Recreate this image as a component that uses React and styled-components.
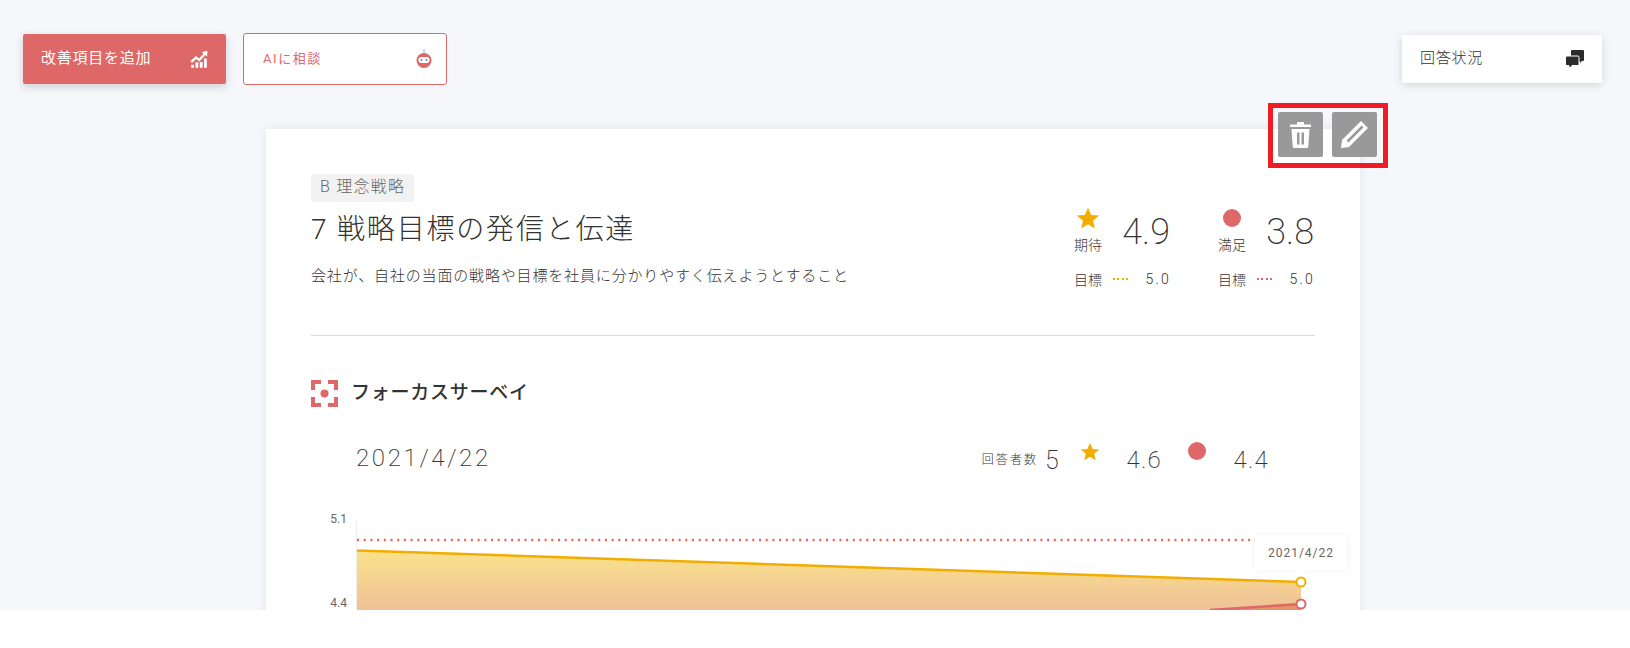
import styled, { createGlobalStyle } from 'styled-components';

const colors = {
  page: '#f6f7fb',
  coral: '#de6868',
  amber: '#f2ad00',
  ink: '#333333',
  grey: '#999999',
};

const GlobalStyle = createGlobalStyle`
  html, body {
    margin: 0;
    background: #fff;
  }
  * {
    box-sizing: border-box;
  }
  body {
    font-family: 'Roboto', 'Noto Sans CJK JP', sans-serif;
    color: ${colors.ink};
  }
`;

const Page = styled.div`
  position: relative;
  height: 610px;
  padding-top: 33px;
  overflow: hidden;
  background: ${colors.page};
`;

const Toolbar = styled.div`
  display: flex;
  align-items: center;
  height: 52px;
  padding: 0 28px 0 23px;
`;

const ButtonText = styled.span`
  margin-bottom: ${(p) => p.$lift}px;
`;

const AddButton = styled.div`
  display: flex;
  align-items: center;
  justify-content: space-between;
  width: 203px;
  height: 50px;
  padding: 0 18px;
  background: ${colors.coral};
  border-radius: 2px;
  box-shadow: 0 3px 8px rgba(0, 0, 0, 0.16);
  color: #fff;
  font-size: 15px;
  letter-spacing: 0.05em;
`;

const AiButton = styled.div`
  display: flex;
  align-items: center;
  justify-content: space-between;
  width: 204px;
  height: 52px;
  margin-left: 17px;
  padding: 0 14px 0 19px;
  background: #fff;
  border: 1px solid ${colors.coral};
  border-radius: 3px;
  color: ${colors.coral};
  font-size: 13px;
  letter-spacing: 0.12em;
`;

const StatusButton = styled.div`
  display: flex;
  align-items: center;
  justify-content: space-between;
  width: 200px;
  height: 48px;
  margin-left: auto;
  padding: 0 18px;
  background: #fff;
  border-radius: 2px;
  box-shadow: 0 2px 8px rgba(0, 0, 0, 0.14);
  font-size: 15px;
  font-weight: 300;
  letter-spacing: 0.05em;
`;

const Card = styled.main`
  width: 1094px;
  min-height: 700px;
  margin: 44px 0 0 266px;
  padding: 45px;
  background: #fff;
  box-shadow: 0 0 10px rgba(0, 0, 0, 0.08);
`;

const CardActions = styled.div`
  position: absolute;
  left: 1268px;
  top: 103px;
  display: flex;
  gap: 9px;
  width: 120px;
  height: 65px;
  padding: 4px 5px;
  border: 5px solid #ee1c25;
`;

const ActionButton = styled.div`
  display: flex;
  align-items: center;
  justify-content: center;
  width: 45px;
  height: 45px;
  background: ${colors.grey};
  border-radius: 2px;
`;

const Header = styled.header`
  display: flex;
  justify-content: space-between;
  padding-bottom: 46px;
  border-bottom: 1px solid #dcdcdc;
`;

const Tag = styled.span`
  display: inline-flex;
  align-items: center;
  height: 28px;
  padding: 0 9px 6px;
  background: #f2f2f2;
  border-radius: 2px;
  color: #666;
  font-size: 16px;
  font-weight: 300;
  letter-spacing: 0.08em;
`;

const Title = styled.h1`
  margin: 8px 0 0;
  font-size: 28px;
  font-weight: 300;
  line-height: 40px;
  letter-spacing: 0.065em;
`;

const Description = styled.p`
  margin: 14px 0 0;
  font-size: 15px;
  font-weight: 300;
  line-height: 24px;
  letter-spacing: 0.056em;
`;

const Metrics = styled.div`
  display: flex;
  gap: 49px;
  margin: 31px 2px 0 0;
`;

const Metric = styled.div`
  width: 95px;
`;

const MetricTop = styled.div`
  display: flex;
  align-items: center;
  justify-content: space-between;
  height: 50px;
`;

const MetricLabel = styled.div`
  display: flex;
  flex-direction: column;
  align-items: center;
  width: 28px;
  font-size: 14px;
  font-weight: 300;
  line-height: 18px;
  white-space: nowrap;
`;

const IconSlot = styled.div`
  display: flex;
  align-items: center;
  justify-content: center;
  height: 24px;
  margin-bottom: 6px;
`;

const Dot = styled.span`
  display: block;
  width: ${(p) => p.$size}px;
  height: ${(p) => p.$size}px;
  border-radius: 50%;
  background: ${colors.coral};
`;

const MetricValue = styled.span`
  position: relative;
  top: 2px;
  margin-right: -1px;
  font-size: 36px;
  font-weight: 200;
  line-height: 1;
`;

const TargetRow = styled.div`
  display: flex;
  align-items: center;
  height: 20px;
  margin-top: 14px;
  font-size: 14px;
  font-weight: 300;
`;

const TargetDots = styled.span`
  width: 16px;
  height: 2px;
  margin-left: 11px;
  background: repeating-linear-gradient(90deg, ${(p) => p.$color} 0 2px, transparent 2px 4.4px);
`;

const TargetValue = styled.span`
  margin: 0 -2px 0 auto;
  letter-spacing: 0.16em;
`;

const SectionTitle = styled.div`
  display: flex;
  align-items: center;
  gap: 13px;
  height: 27px;
  margin-top: 44px;
  font-size: 19px;
  font-weight: 500;
  letter-spacing: 0.04em;
`;

const SectionLabel = styled.span`
  margin-bottom: 6px;
`;

const SurveyRow = styled.div`
  display: flex;
  align-items: center;
  height: 36px;
  margin-top: 33px;
  padding: 0 46px 0 45px;
`;

const SurveyDate = styled.span`
  margin-right: auto;
  font-size: 24px;
  font-weight: 200;
  letter-spacing: 0.11em;
`;

const SurveyLabel = styled.span`
  font-size: 12px;
  font-weight: 300;
  letter-spacing: 0.17em;
`;

const SurveyCount = styled.span`
  position: relative;
  top: 2px;
  width: 35px;
  margin-left: 7px;
  font-size: 25px;
  font-weight: 200;
`;

const SurveyIcon = styled.span`
  position: relative;
  top: -7px;
  display: flex;
  justify-content: center;
  width: 20px;
  margin-left: ${(p) => p.$gap || 0}px;
`;

const SurveyValue = styled.span`
  position: relative;
  top: 2px;
  width: 62px;
  font-size: 24px;
  font-weight: 200;
  letter-spacing: 0.05em;
  text-align: right;
`;

const ChartWrap = styled.div`
  position: relative;
  width: 1040px;
  height: 100px;
  margin: 34px 0 0 9px;
`;

const ChartTooltip = styled.div`
  position: absolute;
  left: 935px;
  top: 25px;
  display: flex;
  align-items: center;
  justify-content: center;
  width: 92px;
  height: 35px;
  background: #fff;
  border-radius: 2px;
  box-shadow: 0 0 6px rgba(0, 0, 0, 0.07);
  color: #666;
  font-size: 12px;
  letter-spacing: 0.08em;

  &::after {
    content: '';
    position: absolute;
    left: 41px;
    bottom: -5px;
    border-left: 5px solid transparent;
    border-right: 5px solid transparent;
    border-top: 5px solid #fff;
  }
`;

const Star = ({ size }) => (
  <svg width={size} height={size} viewBox="0 0 24 24">
    <path
      fill={colors.amber}
      d="M12 1.500l3.100 7.400 8 .6-6.100 5.200 1.900 7.800L12 18.300 5.100 22.500 7 14.700.9 9.500l8-.6z"
    />
  </svg>
);

const GrowthIcon = () => (
  <svg width="18" height="18" viewBox="0 0 18 18" fill="#fff">
    <path d="M0.500 11L6 6l3 2.500L13.500 3.700l-1.700-1.500L17.500 .8 17 6.500l-1.600-1.400-6.200 6.500-3-2.600L2 13z" />
    <rect x="1.200" y="14.800" width="2.800" height="3" />
    <rect x="5.500" y="12.300" width="2.800" height="5.500" />
    <rect x="9.800" y="12" width="2.800" height="5.800" />
    <rect x="14" y="8.500" width="2.800" height="9.300" />
  </svg>
);

const RobotIcon = () => (
  <svg width="16" height="20" viewBox="0 0 16 20">
    <rect x="7" y="0" width="2" height="4" fill="#c9d3de" />
    <circle cx="8" cy="11.500" r="7.500" fill={colors.coral} />
    <rect x="2.500" y="8" width="11" height="6" rx="3" fill="#fff" />
    <circle cx="5.500" cy="11" r="1" fill="#6d86a8" />
    <circle cx="10.500" cy="11" r="1" fill="#6d86a8" />
  </svg>
);

const ChatIcon = () => (
  <svg width="18" height="19" viewBox="0 0 18 19" fill="#2b2b2b">
    <path d="M5 1q0-1 1-1h11q1 0 1 1v9q0 1-1 1h-1.500l-.5 2L13 11H6q-1 0-1-1z" />
    <path
      stroke="#fff"
      strokeWidth="1"
      d="M-.5 7.500q0-1.500 1.500-1.500h11q1 0 1 1.500v7q0 1-1 1H6l-2.500 3.200-.7-3.200H1q-1.500 0-1.500-1z"
    />
  </svg>
);

const TrashIcon = () => (
  <svg width="21" height="26" viewBox="0 0 21 26" fill="#fff">
    <path d="M7 0h7v2.500h7V5H0V2.500h7z" />
    <path
      fillRule="evenodd"
      d="M1.500 7h18l-1.200 17.500q-.1 1.500-1.500 1.500H4.200q-1.400 0-1.500-1.500zM7 10.500v12h2.500v-12zm4.500 0v12H14v-12z"
    />
  </svg>
);

const PencilIcon = () => (
  <svg width="27" height="27" viewBox="0 0 27 27" fill="#fff">
    <path
      fillRule="evenodd"
      d="M20 0l7 7L8 26l-8 1 1-8zM20.600 4.600L5.600 19.600l1.800 1.800 15-15z"
    />
  </svg>
);

const FocusIcon = () => (
  <svg width="27" height="27" viewBox="0 0 27 27" fill={colors.coral}>
    <path d="M0 0h10v4H4v6H0zM17 0h10v10h-4V4h-6zM0 17h4v6h6v4H0zM23 17h4v10H17v-4h6z" />
    <circle cx="13.500" cy="13.500" r="4" />
  </svg>
);

const SurveyChart = () => (
  <svg width="1040" height="100" viewBox="0 0 1040 100">
    <defs>
      <linearGradient id="amberFill" x1="0" y1="0" x2="0" y2="1">
        <stop offset="0" stopColor="#fae28c" />
        <stop offset="1" stopColor="#efc197" />
      </linearGradient>
    </defs>
    <text x="27" y="13" textAnchor="end" fontSize="12" fill="#666" fontFamily="Roboto">5.1</text>
    <text x="27" y="97" textAnchor="end" fontSize="12" fill="#666" fontFamily="Roboto">4.4</text>
    <line x1="36.500" y1="9" x2="36.500" y2="100" stroke="#eeeeee" />
    <polygon points="37,40.500 981,72 981,100 37,100" fill="url(#amberFill)" />
    <polygon points="890,100 981,94 981,100" fill="#e2966a" />
    <line x1="37" y1="30" x2="940" y2="30" stroke="#e8674f" strokeWidth="2.500" strokeDasharray="2 4.700" />
    <line x1="37" y1="40.500" x2="981" y2="72" stroke={colors.amber} strokeWidth="2.500" />
    <line x1="890" y1="100" x2="981" y2="94" stroke={colors.coral} strokeWidth="2.500" />
    <circle cx="981" cy="72" r="4.500" fill="#fff" stroke={colors.amber} strokeWidth="2" />
    <circle cx="981" cy="94" r="4.500" fill="#fff" stroke={colors.coral} strokeWidth="2" />
  </svg>
);

const metricData = [
  { label: '期待', value: '4.9', icon: <Star size={24} />, color: colors.amber },
  { label: '満足', value: '3.8', icon: <Dot $size={18} />, color: colors.coral },
];

const App = () => {
  return (
    <Page>
      <GlobalStyle />
      <Toolbar>
        <AddButton>
          <ButtonText $lift={6}>改善項目を追加</ButtonText>
          <GrowthIcon />
        </AddButton>
        <AiButton>
          <ButtonText $lift={4}>AIに相談</ButtonText>
          <RobotIcon />
        </AiButton>
        <StatusButton>
          <ButtonText $lift={6}>回答状況</ButtonText>
          <ChatIcon />
        </StatusButton>
      </Toolbar>

      <CardActions>
        <ActionButton>
          <TrashIcon />
        </ActionButton>
        <ActionButton>
          <PencilIcon />
        </ActionButton>
      </CardActions>

      <Card>
        <Header>
          <div>
            <Tag>B 理念戦略</Tag>
            <Title>7 戦略目標の発信と伝達</Title>
            <Description>会社が、自社の当面の戦略や目標を社員に分かりやすく伝えようとすること</Description>
          </div>
          <Metrics>
            {metricData.map((m) => (
              <Metric key={m.label}>
                <MetricTop>
                  <MetricLabel>
                    <IconSlot>{m.icon}</IconSlot>
                    {m.label}
                  </MetricLabel>
                  <MetricValue>{m.value}</MetricValue>
                </MetricTop>
                <TargetRow>
                  目標
                  <TargetDots $color={m.color} />
                  <TargetValue>5.0</TargetValue>
                </TargetRow>
              </Metric>
            ))}
          </Metrics>
        </Header>

        <SectionTitle>
          <FocusIcon />
          <SectionLabel>フォーカスサーベイ</SectionLabel>
        </SectionTitle>

        <SurveyRow>
          <SurveyDate>2021/4/22</SurveyDate>
          <SurveyLabel>回答者数</SurveyLabel>
          <SurveyCount>5</SurveyCount>
          <SurveyIcon>
            <Star size={25} />
          </SurveyIcon>
          <SurveyValue>4.6</SurveyValue>
          <SurveyIcon $gap={25}>
            <Dot $size={18} />
          </SurveyIcon>
          <SurveyValue>4.4</SurveyValue>
        </SurveyRow>

        <ChartWrap>
          <SurveyChart />
          <ChartTooltip>2021/4/22</ChartTooltip>
        </ChartWrap>
      </Card>
    </Page>
  );
};

export default App;
